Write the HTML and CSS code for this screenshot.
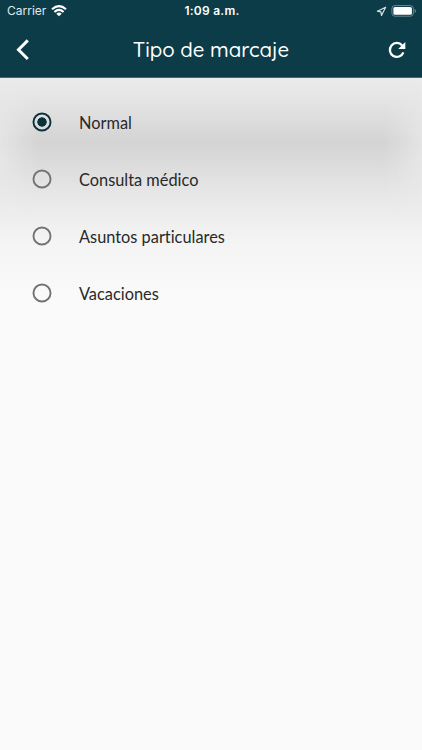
FILE: index.html
```html
<!DOCTYPE html>
<html lang="es">
<head>
<meta charset="utf-8">
<meta name="viewport" content="width=device-width, initial-scale=1">
<title>Tipo de marcaje</title>
<link rel="stylesheet" href="styles.css">
</head>
<body>
<header class="header">
  <div class="status">
    <div class="carrier"><span class="carrier-name">Carrier</span>
      <svg width="16" height="12" viewBox="0 0 16 12" fill="none" stroke="#fff" stroke-width="2.1"><path d="M1 4.3Q8-1.9 15 4.3M3.4 7Q8 2.9 12.6 7"/><path d="M5.3 8.7Q8 6.4 10.7 8.7L8 11.3Z" fill="#fff" stroke="none"/></svg>
    </div>
    <span class="time">1:09 a.m.</span>
    <div class="indicators">
      <svg width="11" height="11" viewBox="0 0 11 11" fill="none" stroke="#d7e1e4" stroke-width="1.2" stroke-linejoin="round"><path d="M9.6 1.2 1.4 5.2 4.9 5.9 5.5 9.4Z"/></svg>
      <svg width="26" height="12" viewBox="0 0 26 12"><rect x=".9" y=".6" width="21.5" height="10.6" rx="3" fill="none" stroke="#6d8990"/><rect x="2.4" y="2.1" width="18.5" height="7.6" rx="1.5" fill="#fff"/><path d="M23.6 4v4q1.4-.5 1.4-2t-1.4-2" fill="#6d8990"/></svg>
    </div>
  </div>
  <div class="toolbar">
    <svg class="back" width="14" height="22" viewBox="0 0 14 22" fill="none" stroke="#fff" stroke-width="3"><path d="M11.8 1.4 2.5 10.7 11.8 20"/></svg>
    <h1 class="title">Tipo de marcaje</h1>
    <svg class="refresh" width="18" height="18" viewBox="0 0 18 18"><path d="M14.2 4.4A7 7 0 1 0 15.4 11.4" fill="none" stroke="#fff" stroke-width="2.3"/><path d="M17.3.9V8H10.2Z" fill="#fff"/></svg>
  </div>
</header>
<main class="options">
  <label class="option"><input class="radio" type="radio" name="tipo" checked><span>Normal</span></label>
  <label class="option"><input class="radio" type="radio" name="tipo"><span>Consulta médico</span></label>
  <label class="option"><input class="radio" type="radio" name="tipo"><span>Asuntos particulares</span></label>
  <label class="option"><input class="radio" type="radio" name="tipo"><span>Vacaciones</span></label>
</main>
</body>
</html>
```

FILE: styles.css
```css
* { box-sizing: border-box; }
body {
  margin: 0;
  min-height: 750px;
  background: #fafafa;
  font-family: Lato, sans-serif;
  color: #292929;
}
svg { display: block; }
.header {
  height: 78px;
  background: #0c3c47;
  border-bottom: 1px solid #416971;
  color: #fff;
}
.status {
  height: 22px;
  display: grid;
  grid-template-columns: 1fr auto 1fr;
  align-items: center;
  padding: 0 5px 0 7px;
  font-family: Inter, sans-serif;
  font-size: 12px;
  line-height: 22px;
}
.carrier { display: flex; align-items: center; gap: 5px; color: #e1e9eb; }
.time { font-weight: 600; letter-spacing: .25px; }
.indicators { display: flex; align-items: center; justify-content: flex-end; gap: 4px; }
.toolbar {
  height: 55px;
  display: grid;
  grid-template-columns: 44px 1fr 44px;
  align-items: center;
  padding: 0 6px 0 16px;
}
.title {
  margin: 0;
  padding-right: 10px;
  font-family: Quicksand, Lato, sans-serif;
  font-size: 20.4px;
  font-weight: 500;
  text-align: center;
  white-space: nowrap;
}
.refresh { margin-left: 16px; }
.options {
  position: relative;
  isolation: isolate;
  min-height: 672px;
  padding-top: 15px;
  background: linear-gradient(#ebebeb 0, #e7e7e7 15px, #dfdfdf 36px, #d8d8d8 53px, #d4d4d4 63px, #d7d7d7 74px, #dddddd 90px, #e4e4e4 108px, #eaeaea 126px, #f0f0f0 147px, #f5f5f5 170px, #f8f8f8 195px, #fafafa 225px);
}
.options::before {
  content: "";
  position: absolute;
  inset: 0 0 auto;
  z-index: -1;
  height: 145px;
  background: linear-gradient(90deg, rgba(244,244,244,.5), rgba(244,244,244,.3) 15px, rgba(244,244,244,0) 40px, rgba(244,244,244,0) 382px, rgba(244,244,244,.3) 407px, rgba(244,244,244,.5));
  mask-image: linear-gradient(transparent, #000 55px, #000 80px, transparent);
}
.option {
  height: 57px;
  display: flex;
  align-items: center;
  gap: 27px;
  padding-left: 32px;
  font-size: 16.35px;
  font-variant-ligatures: none;
}
.option span { padding-top: 2px; }
.radio {
  appearance: none;
  width: 20px;
  height: 20px;
  margin: 0;
  border: 2px solid #737373;
  border-radius: 50%;
  transform: scale(.95);
}
.radio:checked {
  border-color: #09313b;
  background: radial-gradient(circle, #09313b 4.6px, transparent 5.2px);
}
```
